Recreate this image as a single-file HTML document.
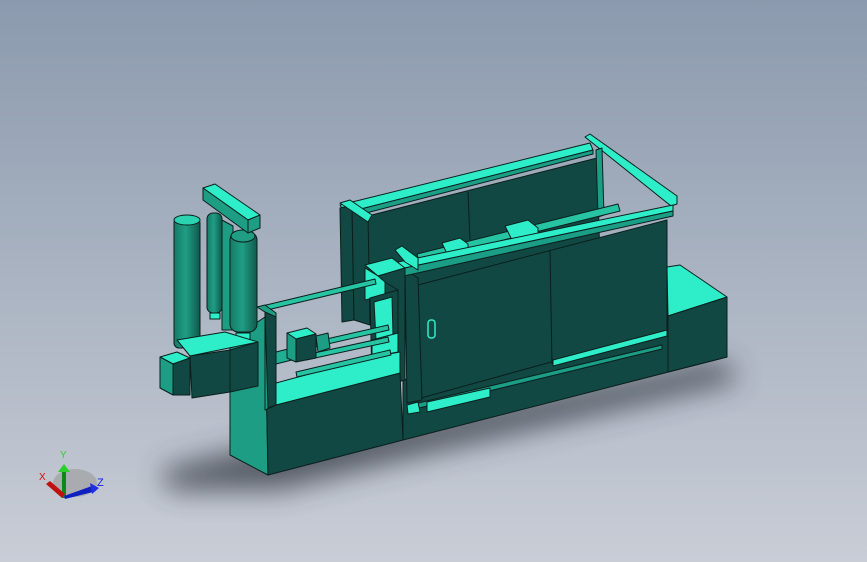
<!DOCTYPE html>
<html><head><meta charset="utf-8"><style>
html,body{margin:0;padding:0;width:867px;height:562px;overflow:hidden}
svg{display:block}
</style></head><body>
<svg width="867" height="562" viewBox="0 0 867 562" xmlns="http://www.w3.org/2000/svg">
<defs>
<linearGradient id="bg" x1="0" y1="0" x2="0" y2="1">
<stop offset="0" stop-color="#8b9aae"/><stop offset="1" stop-color="#c9cdd6"/></linearGradient>
<filter id="bl" x="-50%" y="-50%" width="200%" height="200%"><feGaussianBlur stdDeviation="14"/></filter>
<linearGradient id="cyl" x1="0" y1="0" x2="1" y2="0">
<stop offset="0" stop-color="#157a66"/><stop offset="0.45" stop-color="#1f9e84"/><stop offset="1" stop-color="#10594d"/></linearGradient>
</defs>
<rect width="867" height="562" fill="url(#bg)"/>
<g filter="url(#bl)" opacity="0.8">
<polygon points="160,470 260,445 420,420 720,360 740,380 420,455 280,490 170,490" fill="#3a3f48"/>
</g>
<g stroke="#0a1f1c" stroke-width="1" stroke-linejoin="round">
<!-- long base front -->
<polygon points="403,380 727,300 727,357 403,440" fill="#124843"/>
<!-- right low box -->
<polygon points="667,267 680,265 727,297 668,316" fill="#2eeec9"/>
<polygon points="668,316 727,297 727,357 668,372" fill="#124843"/>
<!-- back panel -->
<polygon points="364,217 597,158 600,262 368,322" fill="#124843"/>
<line x1="468" y1="192" x2="470" y2="240"/>
<!-- back rails -->
<polygon points="340,205 590,143 593,150 345,213" fill="#2eeec9"/>
<polygon points="345,213 593,150 593,154 347,218" fill="#1a9e86"/>
<!-- right frame -->
<polygon points="585,137 590,134 677,196 677,204 671,206" fill="#2eeec9"/>
<polygon points="596,150 602,148 604,215 598,217" fill="#1a9e86"/>
<!-- left back post -->
<polygon points="340,208 352,205 354,320 342,322" fill="#124843"/>
<polygon points="352,205 368,216 370,325 354,320" fill="#124843"/>
<polygon points="340,203 350,200 372,215 368,222" fill="#2eeec9"/>
<!-- rod on top -->
<polygon points="417,254 618,204 620,211 419,261" fill="#27c4a4"/>
<polygon points="442,243 460,238 468,244 468,252 448,256" fill="#2eeec9"/>
<polygon points="505,226 528,220 538,228 538,236 512,240" fill="#2eeec9"/>
<!-- cabinet front -->
<polygon points="418,285 667,220 667,330 421,398" fill="#124843"/>
<polygon points="405,270 418,278 422,400 407,403" fill="#124843"/>
<line x1="550" y1="251" x2="552" y2="364"/>
<!-- front top rail -->
<polygon points="398,262 673,205 673,211 400,269" fill="#2eeec9"/>
<polygon points="400,269 673,211 673,216 404,276" fill="#1a9e86"/>
<polygon points="395,250 402,246 418,258 418,270 405,262" fill="#2eeec9"/>
<!-- handle -->
<rect x="428" y="320" width="7" height="18" rx="3" fill="#124843" stroke="#2eeec9" stroke-width="1.5"/>
<!-- bottom rails -->
<polygon points="553,360 667,330 667,336 553,366" fill="#2eeec9"/>
<polygon points="410,405 662,345 662,349 411,410" fill="#1a9e86"/>
<polygon points="427,402 490,388 490,397 427,412" fill="#2eeec9"/>
<polygon points="407,405 418,402 420,412 408,414" fill="#2eeec9"/>
<!-- mid column -->
<polygon points="365,265 392,258 405,268 378,276" fill="#2eeec9"/>
<polygon points="378,276 405,268 405,380 398,382 398,290 385,282" fill="#124843"/>
<polygon points="365,268 378,276 385,282 385,295 365,300" fill="#2eeec9"/>
<polygon points="370,298 398,290 398,372 372,378" fill="#124843"/>
<polygon points="374,302 392,297 393,335 376,340" fill="#2eeec9"/>
<!-- left section base -->
<polygon points="230,340 265,317 268,475 230,455" fill="#1d9e84"/>
<polygon points="265,312 276,317 276,405 400,373 403,440 268,475" fill="#124843"/>
<!-- interior floor -->
<polygon points="276,383 372,357 400,352 400,373 276,405" fill="#2eeec9"/>
<polygon points="372,340 398,333 398,352 372,357" fill="#2eeec9"/>
<!-- rods -->
<polygon points="262,306 375,279 376,284 263,311" fill="#27c4a4"/>
<polygon points="300,345 388,325 389,330 301,350" fill="#27c4a4"/>
<polygon points="305,355 388,337 389,342 306,360" fill="#27c4a4"/>
<polygon points="296,372 390,350 391,355 297,377" fill="#27c4a4"/>
<polygon points="276,352 300,346 300,358 276,364" fill="#1fb093"/>
<!-- motor -->
<polygon points="287,333 307,328 316,334 296,339" fill="#2eeec9"/>
<polygon points="287,333 296,339 296,362 287,358" fill="#1d9e84"/>
<polygon points="296,339 316,334 316,358 296,362" fill="#124843"/>
<polygon points="316,336 328,333 330,348 318,352" fill="#1d9e84"/>
<!-- left column upper -->
<polygon points="257,307 265,305 276,313 276,405 265,410 265,312" fill="#1d9e84"/>
<polygon points="265,312 276,317 276,405 268,408" fill="#124843"/>
<!-- cylinders -->
<rect x="207" y="213" width="15" height="100" rx="6" fill="url(#cyl)"/>
<rect x="174" y="218" width="26" height="130" rx="5" fill="url(#cyl)"/>
<ellipse cx="187" cy="220" rx="13" ry="5" fill="#2ad4b0"/>
<polygon points="222,220 233,226 233,330 222,330" fill="#1d9e84"/>
<rect x="230" y="232" width="27" height="100" rx="8" fill="url(#cyl)"/>
<ellipse cx="243" cy="236" rx="12" ry="6" fill="#1f9e84"/>
<rect x="210" y="313" width="10" height="6" fill="#2eeec9"/>
<rect x="236" y="333" width="14" height="8" fill="#2eeec9"/>
<!-- T bar -->
<polygon points="203,188 215,184 260,215 248,220" fill="#2eeec9"/>
<polygon points="248,220 260,215 260,228 248,233" fill="#1d9e84"/>
<polygon points="203,188 248,220 248,233 203,200" fill="#1d9e84"/>
<!-- left boxes -->
<polygon points="177,340 225,332 258,342 190,356" fill="#2eeec9"/>
<polygon points="190,356 230,350 230,392 192,398" fill="#124843"/>
<polygon points="230,350 258,342 258,386 230,392" fill="#124843"/>
<polygon points="160,357 177,352 190,358 173,364" fill="#2eeec9"/>
<polygon points="160,357 173,364 173,395 160,388" fill="#1d9e84"/>
<polygon points="173,364 190,358 190,395 173,395" fill="#124843"/>
</g>
<!-- axis triad -->
<ellipse cx="75" cy="483" rx="22" ry="14" fill="#9a9a9a" opacity="0.6"/>
<polygon points="62,470 66,470 66,498 62,498" fill="#0a8a1a"/>
<polygon points="58,472 64,464 70,472" fill="#2ad02a"/>
<polygon points="64,496 92,486 93,492 65,499" fill="#1020c0"/>
<polygon points="90,483 99,488 92,494" fill="#2030e0"/>
<polygon points="46,484 50,481 65,494 62,498" fill="#c01010"/>
<text x="60" y="458" font-family="Liberation Sans,sans-serif" font-size="10" fill="#2ad02a">Y</text>
<text x="39" y="480" font-family="Liberation Sans,sans-serif" font-size="10" fill="#d01010">X</text>
<text x="97" y="486" font-family="Liberation Sans,sans-serif" font-size="11" fill="#1020e0">Z</text>
</svg>
</body></html>
